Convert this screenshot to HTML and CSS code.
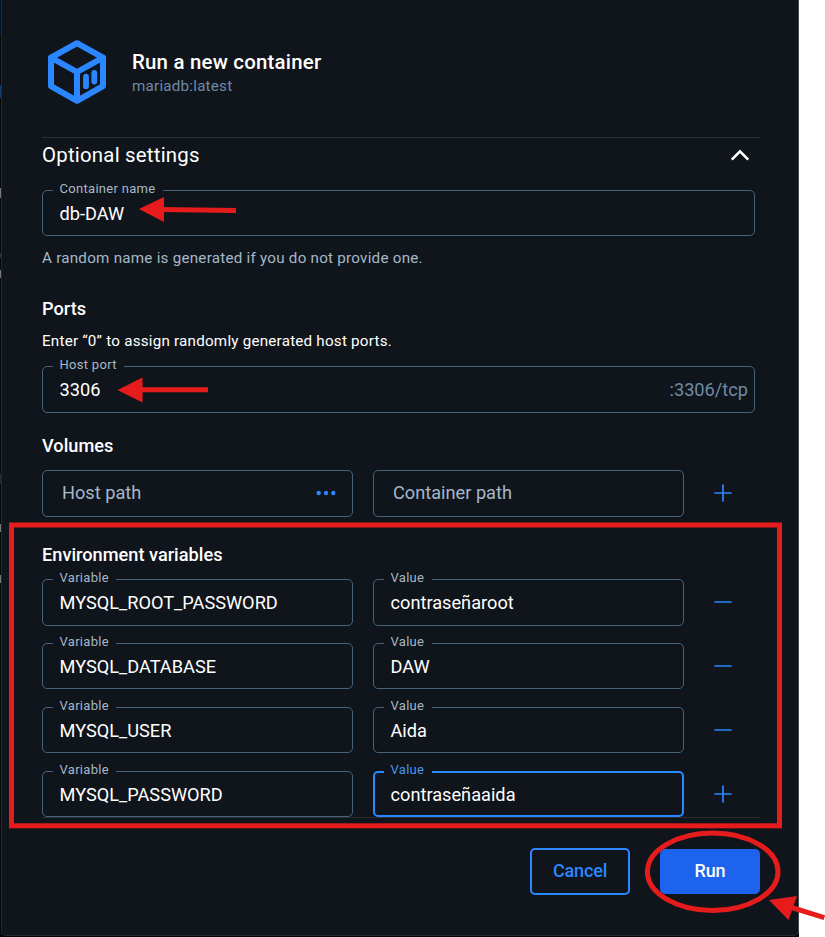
FILE: index.html
```
<!DOCTYPE html>
<html lang="en">
<head>
<meta charset="utf-8">
<title>Run a new container</title>
<link rel="stylesheet" href="styles.css">
</head>
<body>
<div class="backdrop">
<main class="dialog">
  <header class="head">
    <svg class="logo" width="60" height="66" viewBox="0 0 60 66" fill="none" stroke="#2a87ff" stroke-width="6" stroke-linejoin="round" stroke-linecap="round">
      <path d="M30 4.2 56 18.6V47.2L30 61.8 4 47.2V18.6Z"/>
      <path d="M4 18.6 30 33 56 18.6M30 33V61"/>
      <path d="M39 37.6V47.2M47.3 33.8V42.6" stroke-width="5.8"/>
    </svg>
    <div>
      <h1 class="title">Run a new container</h1>
      <p class="image">mariadb:latest</p>
    </div>
  </header>

  <div class="optional">
    <h2 class="optional-title">Optional settings</h2>
    <svg class="chevron" width="20" height="14" viewBox="0 0 20 14" fill="none" stroke="#fff" stroke-width="2.6"><path d="M1.8 11.6 10 3.4l8.2 8.2"/></svg>
  </div>

  <div class="field wide name"><label>Container name</label><span>db-DAW</span></div>
  <p class="helper">A random name is generated if you do not provide one.</p>

  <h3 class="section ports">Ports</h3>
  <p class="hint">Enter “0” to assign randomly generated host ports.</p>
  <div class="field wide port"><label>Host port</label><span>3306</span><span class="suffix">:3306/tcp</span></div>

  <h3 class="section volumes">Volumes</h3>
  <div class="row">
    <div class="field empty"><span>Host path</span>
      <svg class="dots" width="20" height="6" viewBox="0 0 20 6" fill="#2a87ff"><circle cx="2.7" cy="3" r="2.2"/><circle cx="10" cy="3" r="2.2"/><circle cx="17.3" cy="3" r="2.2"/></svg>
    </div>
    <div class="field empty"><span>Container path</span></div>
    <svg class="icon" width="18" height="18" viewBox="0 0 18 18"><path d="M1 9h16M9 1v16"/></svg>
  </div>

  <h3 class="section env">Environment variables</h3>
  <div class="rows">
    <div class="row">
      <div class="field"><label>Variable</label><span>MYSQL_ROOT_PASSWORD</span></div>
      <div class="field"><label>Value</label><span>contraseñaroot</span></div>
      <svg class="icon" width="18" height="18" viewBox="0 0 18 18"><path d="M1 9h16"/></svg>
    </div>
    <div class="row short">
      <div class="field"><label>Variable</label><span>MYSQL_DATABASE</span></div>
      <div class="field"><label>Value</label><span>DAW</span></div>
      <svg class="icon" width="18" height="18" viewBox="0 0 18 18"><path d="M1 9h16"/></svg>
    </div>
    <div class="row short">
      <div class="field"><label>Variable</label><span>MYSQL_USER</span></div>
      <div class="field"><label>Value</label><span>Aida</span></div>
      <svg class="icon" width="18" height="18" viewBox="0 0 18 18"><path d="M1 9h16"/></svg>
    </div>
    <div class="row short">
      <div class="field"><label>Variable</label><span>MYSQL_PASSWORD</span></div>
      <div class="field focus"><label>Value</label><span>contraseñaaida</span></div>
      <svg class="icon" width="18" height="18" viewBox="0 0 18 18"><path d="M1 9h16M9 1v16"/></svg>
    </div>
  </div>

  <footer class="actions">
    <button class="btn cancel">Cancel</button>
    <button class="btn run">Run</button>
  </footer>
</main>
</div>

<svg class="marks" width="825" height="937" viewBox="0 0 825 937" fill="none" stroke="#e61c1c">
  <rect x="11.5" y="525" width="768" height="300.8" stroke-width="5"/>
  <ellipse cx="712.7" cy="871.7" rx="65.3" ry="38.7" stroke-width="5"/>
  <path d="M160 209.4 236 210.6M138 389.8H208M790 907 824.3 917.7" stroke-width="5"/>
  <path d="M139 209 164 197V222ZM117.5 390 142.5 377.5V402.5ZM769 900 797 896 788.5 920Z" fill="#e61c1c" stroke="none"/>
</svg>
</body>
</html>
```
FILE: styles.css
```
* { box-sizing: border-box; }
body {
  margin: 0;
  height: 937px;
  overflow: hidden;
  position: relative;
  background: #fff;
  color: #fff;
  font-family: Roboto, sans-serif;
}
h1, h2, h3, p { margin: 0; }

.backdrop {
  width: 799px;
  height: 937px;
  padding-left: 1px;
  background:
    linear-gradient(#001536, #001536) 0 0 / 1px 35px no-repeat,
    linear-gradient(#103a68, #103a68) 0 85px / 1px 13px no-repeat,
    linear-gradient(#777, #777) 0 188px / 1px 10px no-repeat,
    linear-gradient(#213645, #213645) 0 253px / 1px 5px no-repeat,
    linear-gradient(#777, #777) 0 270px / 1px 8px no-repeat,
    linear-gradient(#282b2e, #282b2e) 0 474px / 1px 10px no-repeat,
    linear-gradient(#777, #777) 0 524px / 1px 8px no-repeat,
    linear-gradient(#777, #777) 0 575px / 1px 8px no-repeat,
    #05080a;
}
.dialog {
  width: 798px;
  height: 936px;
  padding: 0 38px 0 40px;
  background: #10151b;
  border: 1px solid #24292e;
  border-top: 0;
  border-right-color: #45494d;
  border-radius: 0 0 5px 5px;
}

.head {
  display: flex;
  gap: 25px;
  height: 138px;
  padding: 39px 0 0 5px;
  border-bottom: 1px solid #272e36;
}
.logo { flex: none; }
.title { margin-top: 11px; font-size: 20.4px; font-weight: 500; line-height: 24px; letter-spacing: .22px; }
.image { margin-top: 2px; font-size: 15.2px; line-height: 20px; letter-spacing: .22px; color: #6d8ba9; }

.optional { display: flex; justify-content: space-between; align-items: center; height: 34px; padding-right: 10px; }
.optional-title { font-size: 20.4px; font-weight: 400; letter-spacing: .22px; }

.field {
  position: relative;
  display: flex;
  align-items: center;
  width: 311px;
  height: 47px;
  padding: 0 16.5px;
  border: 1px solid #46637c;
  border-radius: 5px;
  font-size: 18.2px;
  line-height: 22px;
}
.field label {
  position: absolute;
  top: -11px;
  left: 10px;
  padding: 0 7.5px 0 6.5px;
  background: #10151b;
  color: #a5b8ca;
  font-size: 13px;
  line-height: 18px;
  letter-spacing: .3px;
}
.wide { width: 713px; }
.name { height: 46px; margin-top: 18px; }
.name span { padding-top: 1px; }
.port { margin-top: 15px; }
.suffix { margin-left: auto; margin-right: -10.5px; color: #6d8ba9; }
.empty { justify-content: space-between; padding: 0 16.5px 1px 19px; color: #a5b8ca; }
.focus { border: 2px solid #2a87ff; padding: 0 15.5px; }
.focus label { top: -12px; left: 9px; color: #4b96ea; }

.helper { margin-top: 12px; color: #a5b8ca; font-size: 15.2px; line-height: 20px; letter-spacing: .24px; }
.hint { margin-top: 11px; font-size: 15.2px; line-height: 20px; letter-spacing: .22px; }
.section { font-size: 18.2px; font-weight: 500; line-height: 22px; }
.ports { margin-top: 30px; }
.volumes { margin-top: 22px; }
.env { margin-top: 27px; }

.row { display: flex; align-items: center; gap: 20px; height: 47px; margin-top: 13px; }
.rows { border-bottom: 1px solid #272e36; }
.rows .short { height: 46px; margin-top: 18px; }
.rows .row:first-child + .short { margin-top: 17px; }
.short .field { height: 46px; }
.short .field span { padding-top: 1px; }
.icon { margin: 0 0 1px 9.5px; fill: none; stroke: #2a87ff; stroke-width: 1.7; stroke-linecap: round; }
.short .icon { margin-bottom: 0; }

.actions { display: flex; justify-content: flex-end; align-items: center; gap: 30px; margin-top: 30px; }
.btn { width: 100px; height: 47px; padding: 0 0 2px; border-radius: 5px; font: 500 18px/22px Roboto, sans-serif; letter-spacing: -.15px; }
.cancel { border: 2px solid #2a87ff; background: none; color: #2a87ff; }
.run { height: 45px; border: 0; background: #1d63ed; color: #fff; }

.marks { position: absolute; top: 0; left: 0; }
```
